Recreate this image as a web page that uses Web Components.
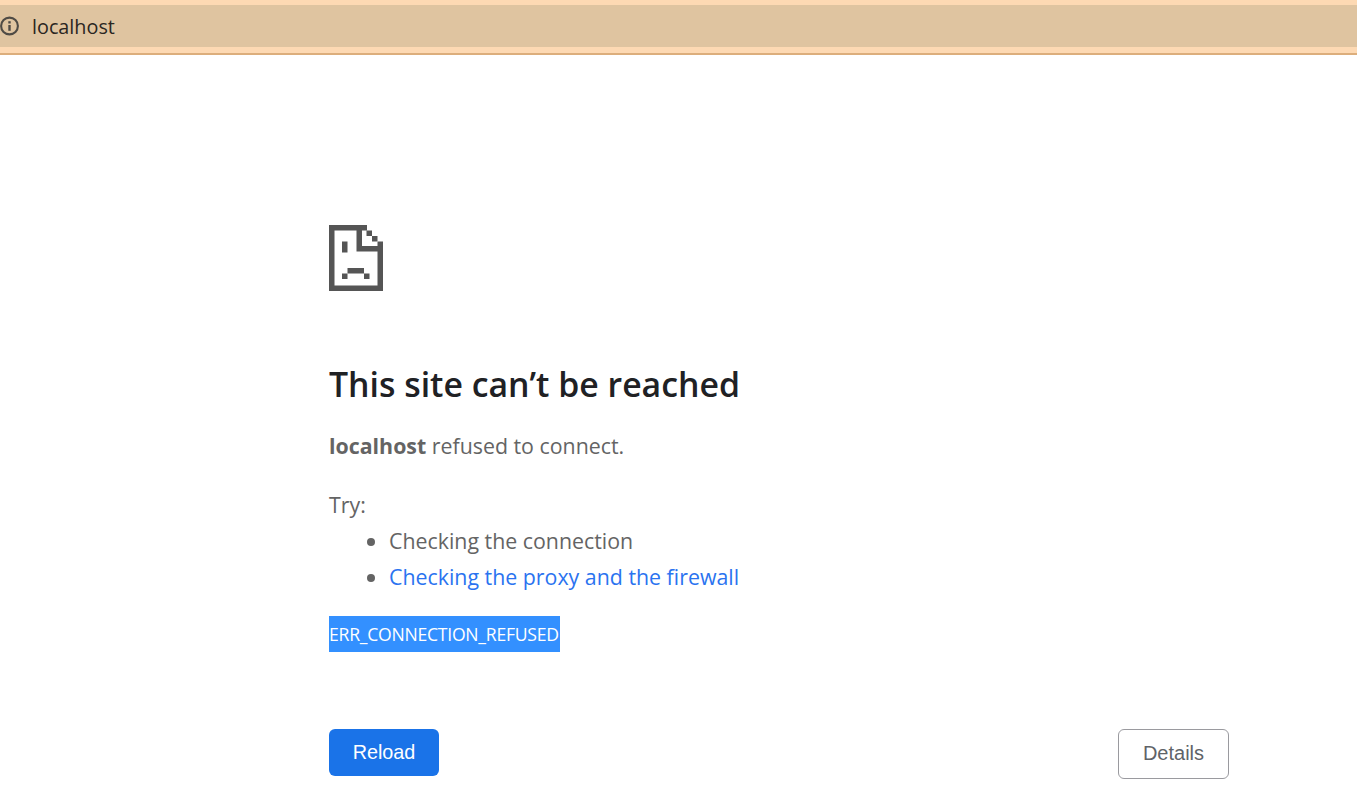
<!DOCTYPE html>
<html>
<head>
<meta charset="utf-8">
<title>localhost</title>
<style>
  html, body { margin: 0; background: #fff; }
  body { font-family: "Open Sans", "Liberation Sans", sans-serif; height: 808px; overflow: hidden; }
</style>
</head>
<body>
<info-bar>localhost</info-bar>
<error-page>
  <file-icon slot="icon"></file-icon>
  <span slot="title">This site can’t be reached</span>
  <span slot="summary"><b>localhost</b> refused to connect.</span>
  <try-list slot="tips">
    <li>Checking the connection</li>
    <li><a href="#">Checking the proxy and the firewall</a></li>
  </try-list>
  <span slot="code">ERR_CONNECTION_REFUSED</span>
  <ui-button slot="primary" kind="primary">Reload</ui-button>
  <ui-button slot="secondary">Details</ui-button>
</error-page>

<script>
class InfoBar extends HTMLElement {
    constructor() {
        super();
        this.attachShadow({ mode: "open" });
        this.shadowRoot.innerHTML = `
            <style>
                :host {
                    display: block;
                    box-sizing: border-box;
                    height: 55px;
                    padding: 5px 0 6px;
                    background: #fdd9b3;
                    border-bottom: 2px solid #dcae7c;
                }
                .bar {
                    display: flex;
                    align-items: center;
                    gap: 13px;
                    height: 42px;
                    background: #dfc4a0;
                    color: #2a2622;
                    font-size: 19.8px;
                }
                svg { display: block; }
            </style>
            <div class="bar">
                <svg width="19" height="20" viewBox="0 0 19 20" fill="none">
                    <circle cx="9.5" cy="10" r="8.4" stroke="#4f4b45" stroke-width="2.1"/>
                    <rect x="8.3" y="9" width="2.4" height="5.8" fill="#4f4b45"/>
                    <rect x="8.3" y="5.2" width="2.4" height="2.3" fill="#4f4b45"/>
                </svg>
                <slot></slot>
            </div>
        `;
    }
}

class FileIcon extends HTMLElement {
    constructor() {
        super();
        this.attachShadow({ mode: "open" });
        this.shadowRoot.innerHTML = `
            <style>
                :host { display: block; width: 54px; height: 66px; }
                svg { display: block; }
            </style>
            <svg width="54" height="66" viewBox="0 0 54 66" fill="#555">
                <path fill-rule="evenodd" d="M0 0H38V5.5H33V21H54V66H0ZM5.5 5.5V60.5H48.5V26.5H27.5V5.5Z"/>
                <rect x="37.5" y="5.5" width="5.5" height="5.5"/>
                <rect x="43" y="11" width="5.5" height="5.5"/>
                <rect x="48.5" y="16.5" width="5.5" height="5"/>
                <rect x="13" y="16.5" width="5.5" height="11"/>
                <rect x="18.5" y="43" width="16.5" height="5.5"/>
                <rect x="13" y="48.5" width="5.5" height="5.5"/>
                <rect x="35" y="48.5" width="5.5" height="5.5"/>
            </svg>
        `;
    }
}

class TryList extends HTMLElement {
    constructor() {
        super();
        this.attachShadow({ mode: "open" });
        this.shadowRoot.innerHTML = `
            <style>
                :host { display: block; }
                .label { line-height: 36px; }
                .items { display: block; padding-left: 60px; }
            </style>
            <div class="label">Try:</div>
            <div class="items"><slot></slot></div>
        `;
    }
    connectedCallback() {
        // list items come from the page, so style them here by hand
        this.querySelectorAll("li").forEach((li) => {
            li.style.lineHeight = "36px";
            li.style.color = "#646464";
        });
        this.querySelectorAll("a").forEach((a) => {
            a.style.color = "#2a73f0";
            a.style.textDecoration = "none";
        });
    }
}

class UiButton extends HTMLElement {
    constructor() {
        super();
        this.attachShadow({ mode: "open" });
        this.shadowRoot.innerHTML = `
            <style>
                :host {
                    display: inline-flex;
                    box-sizing: border-box;
                    align-items: center;
                    justify-content: center;
                    height: 50px;
                    width: 111px;
                    padding-bottom: 2px;
                    border: 1px solid #9a9a9f;
                    border-radius: 6px;
                    background: #fff;
                    color: #5f6368;
                    font: 20px "Liberation Sans", Arial, sans-serif;
                }
                :host([kind="primary"]) {
                    height: 47px;
                    width: 110px;
                    padding: 0 0 1px 0;
                    border: 0;
                    background: #1a73e8;
                    color: #fff;
                    font-size: 19.8px;
                }
            </style>
            <slot></slot>
        `;
    }
}

class ErrorPage extends HTMLElement {
    constructor() {
        super();
        this.attachShadow({ mode: "open" });
        this.shadowRoot.innerHTML = `
            <style>
                :host {
                    display: block;
                    width: 900px;
                    padding: 170px 0 0 329px;
                    color: #646464;
                    font-size: 21.35px;
                }
                h1 {
                    margin: 70px 0 0;
                    color: #202124;
                    font-size: 33.8px;
                    font-weight: 600;
                    line-height: 46px;
                }
                .summary { margin-top: 21px; line-height: 36px; }
                .tips { margin-top: 23px; }
                .code {
                    display: inline-block;
                    margin-top: 21px;
                    padding: 0 1px 0 0;
                    background: #3390ff;
                    color: #fff;
                    font-size: 17.6px;
                    letter-spacing: -0.25px;
                    line-height: 36px;
                }
                .actions {
                    display: flex;
                    justify-content: space-between;
                    align-items: flex-start;
                    margin-top: 77px;
                }
            </style>
            <slot name="icon"></slot>
            <h1><slot name="title"></slot></h1>
            <div class="summary"><slot name="summary"></slot></div>
            <div class="tips"><slot name="tips"></slot></div>
            <div class="code"><slot name="code"></slot></div>
            <div class="actions">
                <slot name="primary"></slot>
                <slot name="secondary"></slot>
            </div>
        `;
    }
}

customElements.define("info-bar", InfoBar);
customElements.define("file-icon", FileIcon);
customElements.define("try-list", TryList);
customElements.define("ui-button", UiButton);
customElements.define("error-page", ErrorPage);
</script>
</body>
</html>
